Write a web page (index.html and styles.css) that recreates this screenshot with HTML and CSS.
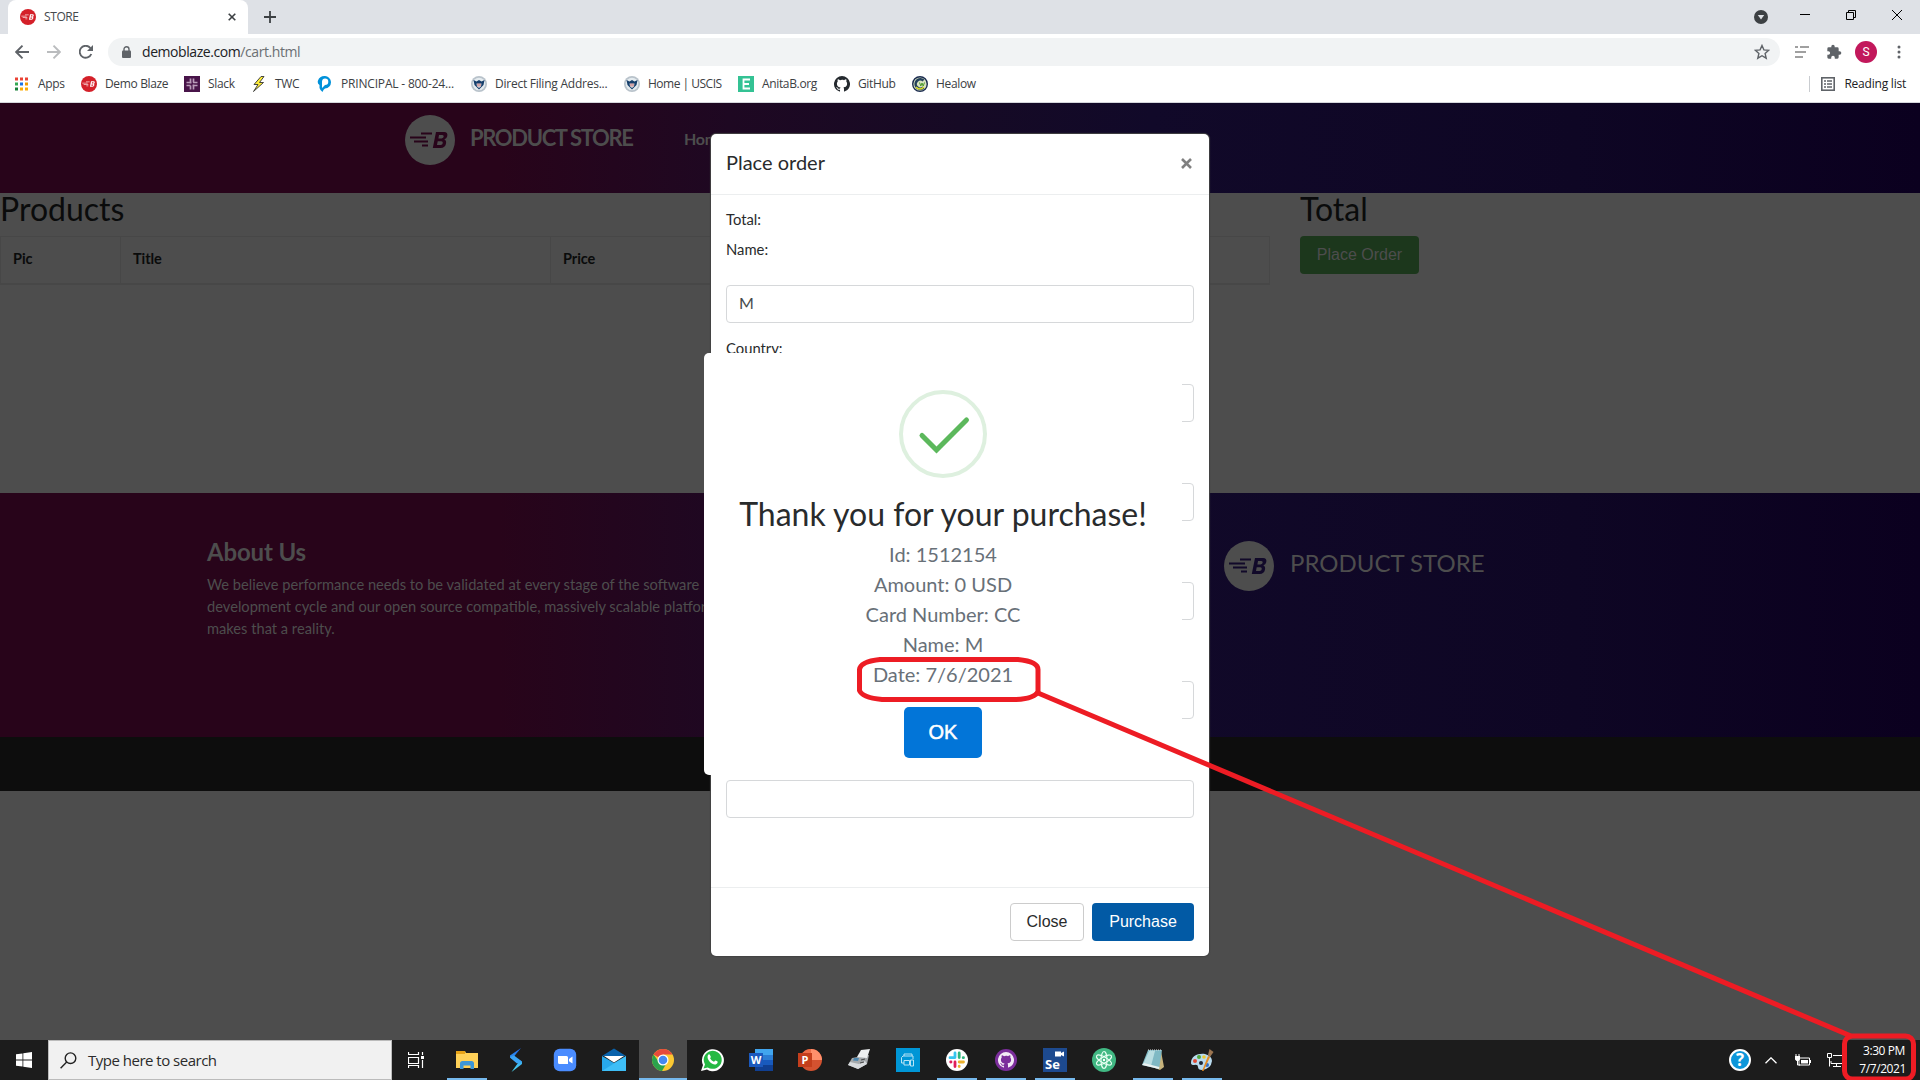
FILE: index.html
```html
<!DOCTYPE html>
<html lang="en">
<head>
<meta charset="utf-8">
<title>STORE</title>
<link rel="stylesheet" href="styles.css">
</head>
<body>
<svg class="defs" width="0" height="0">
  <symbol id="blaze" viewBox="0 0 50 50"><path d="M5 22.500h16M16 18.500h11M9 26.500h14M17 30.500h6" stroke="currentColor" stroke-width="1.800" fill="none"/><path fill-rule="evenodd" d="M31 17h8q4 0 3.300 4q-.6 3-3 3.600q2.300.8 1.700 4Q40.300 33 35.500 33H27.800ZM34 20l-.6 3.400h3.300q1.800 0 2-1.800q.2-1.600-1.400-1.600ZM32.700 26.300l-.7 3.700h3.600q1.900 0 2.200-1.900q.2-1.800-1.500-1.800Z" fill="currentColor"/></symbol>
  <symbol id="dhs" viewBox="0 0 16 16"><circle cx="8" cy="8" r="8" fill="#b9c3cb"/><circle cx="8" cy="8" r="6.300" fill="#e4ebef"/><path d="M2.500 4l3 1.500L8 4l2.500 1.500 3-1.500-1 5L8 13.500 3.500 9Z" fill="#173f6c"/><path d="M5.500 7.500h5l-.5 3-2 1.500-2-1.500Z" fill="#d9e4e9"/><path d="M7 7.500v3M9 7.500v3" stroke="#c44" stroke-width=".8"/></symbol>
  <symbol id="cat" viewBox="0 0 16 16"><path fill="currentColor" d="M8 0a8 8 0 0 0-2.530 15.590c.4.070.55-.17.55-.38v-1.490c-2.230.49-2.700-.94-2.700-.94-.36-.92-.89-1.170-.89-1.170-.73-.5.05-.49.050-.49.810.06 1.230.83 1.230.83.720 1.230 1.880.87 2.340.67.070-.52.280-.87.510-1.070-1.780-.2-3.640-.89-3.640-3.950 0-.87.310-1.590.82-2.150-.08-.2-.36-1.020.08-2.120 0 0 .67-.21 2.200.82A7.600 7.600 0 0 1 8 3.870c.68 0 1.360.09 2 .27 1.530-1.040 2.200-.82 2.200-.82.440 1.100.16 1.920.08 2.120.510.560.820 1.270.820 2.150 0 3.070-1.870 3.750-3.650 3.950.290.250.540.730.540 1.480v2.190c0 .21.150.460.550.380A8 8 0 0 0 8 0Z"/></symbol>
</svg>

<div class="tabstrip">
  <div class="tab">
    <span class="favicon"><svg viewBox="4 6 42 38" width="14" height="14"><use href="#blaze" width="50" height="50"/></svg></span>
    <span class="tab-title">STORE</span>
    <svg class="tab-x" width="8" height="8" viewBox="0 0 8 8"><path d="M.7.7l6.600 6.600M7.300.7L.7 7.300" stroke="#3c4043" stroke-width="1.600"/></svg>
  </div>
  <svg class="plus" width="12" height="12" viewBox="0 0 12 12"><path d="M6 0v12M0 6h12" stroke="#3c4043" stroke-width="1.800"/></svg>
  <div class="window-controls">
    <svg width="14" height="14" viewBox="0 0 14 14"><circle cx="7" cy="7" r="7" fill="#3c4043"/><path d="M3.800 5h6.400L7 9.500Z" fill="#dee1e6"/></svg>
    <svg width="10" height="11" viewBox="0 0 10 11"><path d="M0 5.500h10" stroke="#000"/></svg>
    <svg width="10" height="10" viewBox="0 0 10 10"><path d="M.5 2.500h7v7h-7ZM2.500 2.500V.5h7v7h-2" fill="none" stroke="#000"/></svg>
    <svg width="10" height="10" viewBox="0 0 10 10"><path d="M0 0l10 10M10 0L0 10" stroke="#000"/></svg>
  </div>
</div>

<div class="toolbar">
  <div class="nav-buttons">
    <svg width="14" height="14" viewBox="0 0 14 14"><path d="M14 7H1M7.500.7L1.200 7l6.300 6.300" fill="none" stroke="#5f6368" stroke-width="1.900"/></svg>
    <svg width="14" height="14" viewBox="0 0 14 14"><path d="M0 7h13M6.500.7L12.800 7l-6.300 6.300" fill="none" stroke="#babcbe" stroke-width="1.900"/></svg>
    <svg width="14" height="14" viewBox="0 0 14 14"><path d="M12.300 9A6 6 0 1 1 11.200 2.800L13 4.600" fill="none" stroke="#5f6368" stroke-width="1.900"/><path d="M14 0v6H8Z" fill="#5f6368"/></svg>
  </div>
  <div class="omnibox">
    <svg width="9" height="12" viewBox="0 0 9 12"><path d="M2 5V3.200a2.500 2.500 0 0 1 5 0V5" fill="none" stroke="#5f6368" stroke-width="1.400"/><rect y="4.500" width="9" height="7.500" rx="1" fill="#5f6368"/></svg>
    <span class="url">demoblaze.com<em>/cart.html</em></span>
    <svg class="star" width="16" height="16" viewBox="0 0 16 16"><path d="M8 1.500l1.900 4.400 4.800.4-3.600 3.200 1.100 4.700L8 11.700l-4.200 2.500 1.100-4.700L1.300 6.300l4.800-.4Z" fill="none" stroke="#5f6368" stroke-width="1.400"/></svg>
  </div>
  <svg class="ext-list" width="14" height="12" viewBox="0 0 14 12"><path d="M0 1h3M5 1h9M0 6h11M0 11h8" stroke="#a0a0a0" stroke-width="2"/></svg>
  <svg class="puzzle" width="16" height="16" viewBox="0 0 24 24"><path fill="#5f6368" d="M20.500 11H19V7a2 2 0 0 0-2-2h-4V3.500a2.500 2.500 0 0 0-5 0V5H4a2 2 0 0 0-2 2v3.800h1.500a2.700 2.700 0 0 1 0 5.400H2V20a2 2 0 0 0 2 2h3.800v-1.500a2.700 2.700 0 0 1 5.400 0V22H17a2 2 0 0 0 2-2v-4h1.500a2.500 2.500 0 0 0 0-5Z"/></svg>
  <span class="avatar">S</span>
  <svg class="dots" width="4" height="14" viewBox="0 0 4 14"><g fill="#5f6368"><circle cx="2" cy="2" r="1.500"/><circle cx="2" cy="7" r="1.500"/><circle cx="2" cy="12" r="1.500"/></g></svg>
</div>

<div class="bookmarks">
  <a class="bm apps"><svg width="14" height="14" viewBox="0 0 14 14"><path d="M0 2h3M5 2h3M10 2h3" stroke="#ea4335" stroke-width="3"/><path d="M0 7h3" stroke="#34a853" stroke-width="3"/><path d="M5 7h3" stroke="#1a73e8" stroke-width="3"/><path d="M10 7h3" stroke="#f29900" stroke-width="3"/><path d="M0 12h3" stroke="#188038" stroke-width="3"/><path d="M5 12h3M10 12h3" stroke="#fbab05" stroke-width="3"/></svg><span>Apps</span></a>
  <a class="bm demo"><span class="favicon"><svg viewBox="4 6 42 38" width="14" height="14"><use href="#blaze" width="50" height="50"/></svg></span><span>Demo Blaze</span></a>
  <a class="bm slack"><svg width="16" height="16" viewBox="0 0 16 16"><path fill="#481449" d="M0 0h16v16H0z"/><path d="M6.500 2.500v5M9.500 2.500v4M6.500 9.500v4M9.500 8.500v5M2.500 6.500h5M9 6.500h4.500M2.500 9.500h4M8.500 9.500h5" stroke="#b99bb9" stroke-width="1.700"/></svg><span>Slack</span></a>
  <a class="bm twc"><svg width="16" height="16" viewBox="0 0 16 16"><path d="M10 .5L3 8.500h4L2.500 15.500 12.500 6.500H8.500L13 .5Z" fill="#ffee38" stroke="#333" stroke-width=".9"/></svg><span>TWC</span></a>
  <a class="bm principal"><svg width="16" height="16" viewBox="0 0 16 16"><path d="M7.500 0a6 6 0 0 1 .5 12.500Q6.500 13 5.500 16 3 14 2.500 12V9Q0 7.500 1 4.500 2.500 0 7.500 0Z" fill="#0091da"/><path d="M8 2.500a3.300 3.300 0 0 1 0 6.600L5 12V5.500A3.300 3.300 0 0 1 8 2.500Z" fill="#fff"/></svg><span>PRINCIPAL - 800-24...</span></a>
  <a class="bm filing"><svg width="16" height="16"><use href="#dhs"/></svg><span>Direct Filing Addres...</span></a>
  <a class="bm uscis"><svg width="16" height="16"><use href="#dhs"/></svg><span>Home | USCIS</span></a>
  <a class="bm anita"><svg width="16" height="16" viewBox="0 0 16 16"><path fill="#34c294" d="M0 0h16v16H0z"/><path d="M12 3.500H5.500v9H12M5.500 8h5.500" fill="none" stroke="#fff" stroke-width="1.800"/></svg><span>AnitaB.org</span></a>
  <a class="bm github"><svg width="16" height="16" color="#24292e"><use href="#cat"/></svg><span>GitHub</span></a>
  <a class="bm healow"><svg width="16" height="16" viewBox="0 0 16 16"><circle cx="8" cy="8" r="7.300" fill="#d8e2c0" stroke="#1b2c50" stroke-width="1.400"/><path d="M11.500 4.500a4.700 4.700 0 1 0 0 7" fill="none" stroke="#24415c" stroke-width="2.600"/><path d="M4 11q4 4 8 0" fill="none" stroke="#dddf28" stroke-width="1.400"/><path d="M7.500 6.500l1.300 3.500 1.200-3 1.200 3 1.300-3.500" fill="none" stroke="#4c9a2b"/></svg><span>Healow</span></a>
  <a class="reading"><svg width="14" height="14" viewBox="0 0 14 14"><rect x=".8" y=".8" width="12.400" height="12.400" fill="none" stroke="#5f6368" stroke-width="1.600"/><path d="M3 4h2M6 4h5M3 7h2M6 7h5M3 10h2M6 10h5" stroke="#5f6368" stroke-width="1.400"/></svg><span>Reading list</span></a>
</div>

<main class="page">
  <header class="site-nav">
    <svg class="brand-logo" width="50" height="50"><circle cx="25" cy="25" r="25" fill="#4d4d4d"/><use href="#blaze" width="50" height="50"/></svg>
    <span class="brand">PRODUCT STORE</span>
    <nav><a>Home</a><a>Contact</a><a>About us</a><a>Cart</a><a>Log out</a><a>Welcome S</a></nav>
  </header>
  <section class="cart">
    <div class="products">
      <h2>Products</h2>
      <div class="cart-head"><b>Pic</b><b>Title</b><b>Price</b><b>x</b></div>
    </div>
    <div class="total">
      <h2>Total</h2>
      <button class="place">Place Order</button>
    </div>
  </section>
  <footer class="site-footer">
    <div class="about">
      <h4>About Us</h4>
      <p>We believe performance needs to be validated at every stage of the software<br>development cycle and our open source compatible, massively scalable platform<br>makes that a reality.</p>
    </div>
    <div class="foot-brand">
      <svg class="brand-logo" width="50" height="50"><circle cx="25" cy="25" r="25" fill="#4d4d4d"/><use href="#blaze" width="50" height="50"/></svg>
      <span>PRODUCT STORE</span>
    </div>
  </footer>
  <div class="copyright"></div>

  <div class="modal">
    <div class="modal-head"><h5>Place order</h5><svg width="11" height="11" viewBox="0 0 11 11"><path d="M1 1l9 9M10 1L1 10" stroke="#808080" stroke-width="2.600"/></svg></div>
    <div class="modal-body">
      <p class="sum">Total:</p>
      <label>Name:</label><div class="field">M</div>
      <label>Country:</label><div class="field"></div>
      <label>City:</label><div class="field"></div>
      <label>Credit card:</label><div class="field"></div>
      <label>Month:</label><div class="field"></div>
      <label>Year:</label><div class="field"></div>
    </div>
    <div class="modal-foot"><button class="close">Close</button><button class="purchase">Purchase</button></div>
  </div>

  <div class="alert">
    <svg width="88" height="88" viewBox="0 0 88 88"><circle cx="44" cy="44" r="42" fill="none" stroke="#def0df" stroke-width="4"/><path d="M23 45.500L37.500 60 67.500 30" fill="none" stroke="#5cb85c" stroke-width="5" stroke-linecap="round"/></svg>
    <h2>Thank you for your purchase!</h2>
    <p>Id: 1512154<br>Amount: 0 USD<br>Card Number: CC<br>Name: M<br>Date: 7/6/2021</p>
    <button class="ok">OK</button>
  </div>
</main>

<div class="taskbar">
  <div class="start"><svg width="16" height="16" viewBox="0 0 16 16"><path fill="#fff" d="M0 2.300l6.500-.9v6.200H0ZM7.300 1.300L16 0v7.600H7.300ZM0 8.400h6.500v6.200L0 13.700ZM7.300 8.400H16V16l-8.700-1.300Z"/></svg></div>
  <div class="search"><svg width="17" height="17" viewBox="0 0 17 17"><circle cx="10.500" cy="6.200" r="5.300" fill="none" stroke="#222" stroke-width="1.400"/><path d="M6.700 10L.6 16.200" stroke="#222" stroke-width="1.400"/></svg><span>Type here to search</span></div>
  <div class="taskview"><svg width="16" height="16" viewBox="0 0 16 16"><path d="M.5 0v2.500h10V0M.5 5.500h10v6H.5ZM.5 16v-2.500h10V16M14.500 0v3M14.500 8v8" fill="none" stroke="#fff" stroke-width="1.200"/><path d="M13 4h3v3h-3z" fill="#fff"/></svg></div>
  <div class="apps-row">
    <i class="on"><svg width="24" height="24" viewBox="0 0 24 24"><path d="M1 3h9l1 2h12v15H1Z" fill="#ffd158"/><path d="M1 3h9v3H1Z" fill="#e8a317"/><path d="M5 21v-5.500a2.500 2.500 0 0 1 2.500-2.500h9a2.500 2.500 0 0 1 2.500 2.500V21h-3.500v-3.500h-7V21Z" fill="#3c96d8"/></svg></i>
    <i><svg width="24" height="24" viewBox="0 0 24 24"><defs><linearGradient id="bolt" x2="0" y2="1"><stop stop-color="#1c62e8"/><stop offset="1" stop-color="#4fe0f5"/></linearGradient></defs><path d="M17 0L6 7.500v2l8 5.500L7.500 24 18 16v-2.500L9.500 9Z" fill="url(#bolt)"/><path d="M6 9.500l7 6 5-2-8-6Z" fill="#3ba4f5"/></svg></i>
    <i><svg width="24" height="24" viewBox="0 0 24 24"><rect x=".8" y=".8" width="22.400" height="22.400" rx="6" fill="#4a8cff"/><path d="M5 8h8.500q1.500 0 1.500 1.500V16H6.500Q5 16 5 14.500ZM16 11l3.500-2.500v7L16 13.200Z" fill="#fff"/></svg></i>
    <i><svg width="24" height="24" viewBox="0 0 24 24"><path d="M0 8l12-7.500L24 8Z" fill="#0a62ab"/><path d="M0 8v15h24V8L12 15Z" fill="#28a8ea"/><path d="M0 23L24 8v15Z" fill="#50d0ff" opacity=".55"/><path d="M2 8h20L12 14.500Z" fill="#fff"/></svg></i>
    <i class="active"><svg width="24" height="24" viewBox="0 0 24 24"><circle cx="12" cy="12" r="11" fill="#fbc832"/><path d="M12 12L2.500 6.500A11 11 0 0 1 21.500 6.500H12Z" fill="#e64a3c"/><path d="M2.500 6.500A11 11 0 0 0 11 23l5-8.500-8-.5Z" fill="#2ba24c"/><circle cx="12" cy="12" r="5.500" fill="#fff"/><circle cx="12" cy="12" r="4.300" fill="#4688f1"/></svg></i>
    <i><svg width="24" height="24" viewBox="0 0 24 24"><path d="M1 23l2-6A11 11 0 1 1 7 21.500Z" fill="#fff"/><path d="M3.500 20.500L5 16.500A9 9 0 1 1 7.800 19.400Z" fill="#25b943"/><path d="M8.500 6.500c1-.8 1.500 0 2.300 2.200.2.600-1 1.300-.6 1.900q1.300 2.300 3.700 3.200c.6.200 1-1.400 1.600-1.200 2 .9 2.500 1 2.100 1.800-1 2.600-3.300 2.300-5.300 1.400C9 14.300 6 9 8.500 6.500Z" fill="#fff"/></svg></i>
    <i><svg width="24" height="24" viewBox="0 0 24 24"><path fill="#41a5ee" d="M6 1h18v6H6z"/><path fill="#2b7cd3" d="M6 7h18v5H6z"/><path fill="#185abd" d="M6 12h18v5H6z"/><path fill="#103f91" d="M6 17h18v6H6z"/><path fill="#1b59bd" d="M0 5h14v14H0z"/><text x="7" y="16" text-anchor="middle" class="glyph">W</text></svg></i>
    <i><svg width="24" height="24" viewBox="0 0 24 24"><circle cx="13" cy="12" r="11" fill="#d35230"/><path d="M13 1a11 11 0 0 1 11 11H13Z" fill="#ff8f6b"/><path d="M13 1v11H2A11 11 0 0 1 13 1Z" fill="#ed6c47"/><path fill="#c43e1c" d="M0 5h14v14H0z"/><text x="7" y="16" text-anchor="middle" class="glyph">P</text></svg></i>
    <i><svg width="24" height="24" viewBox="0 0 24 24"><path d="M1 17l4-7 17-3-2 9-9 5Z" fill="#a5a9ac"/><path d="M10 9l4-7 9-1-3 9Z" fill="#eef0f1"/><path d="M1 17l10 4 9-5-2-3-6 3-9-2Z" fill="#d7dadd"/><path d="M7 10h5l-1 3-5-.5Z" fill="#4c86ae"/><path d="M14 12l4-1M13 15l4-1" stroke="#444"/></svg></i>
    <i><svg width="24" height="24" viewBox="0 0 24 24"><path fill="#0096d6" d="M0 0h24v24H0z"/><path d="M8 8V6h8v2M8 15H5.500V9.500L7 8h10v3M8 17v-4.500h5.500V17ZM14.500 12h3v6h-3Z" fill="none" stroke="#b9e4f5"/></svg></i>
    <i class="on"><svg width="24" height="24" viewBox="0 0 24 24"><circle cx="12" cy="12" r="11" fill="#fff"/><g stroke-width="2.800" stroke-linecap="round"><path d="M10 5v4.500M5 9.700h4" stroke="#36c5f0"/><path d="M14.200 5v4.500M18.500 9.700h-.3" stroke="#2eb67d"/><path d="M14.200 14h4.300M14.200 18.500v-.3" stroke="#ecb22e"/><path d="M10 14v4.500M5.700 14H6" stroke="#e01e5a"/></g></svg></i>
    <i class="on"><svg width="24" height="24" viewBox="0 0 24 24"><circle cx="12" cy="12" r="11" fill="#7b2d9b"/><svg x="4" y="4" width="16" height="16" color="#f3eaf6"><use href="#cat"/></svg></svg></i>
    <i class="on"><svg width="24" height="24" viewBox="0 0 24 24"><path fill="#1d4a8f" d="M0 0h24v24H0z"/><path d="M12 3.500h6V5l3-1.500v5L18 7v1.500h-6Z" fill="#fff"/><text x="2" y="21" class="glyph se">Se</text></svg></i>
    <i><svg width="24" height="24" viewBox="0 0 24 24"><circle cx="12" cy="12" r="12" fill="#41b883"/><g fill="none" stroke="#e8fff3" stroke-width="1.100"><ellipse cx="12" cy="12" rx="3" ry="8.500"/><ellipse cx="12" cy="12" rx="3" ry="8.500" transform="rotate(60 12 12)"/><ellipse cx="12" cy="12" rx="3" ry="8.500" transform="rotate(120 12 12)"/></g><circle cx="12" cy="12" r="1.200" fill="#fff"/></svg></i>
    <i class="on"><svg width="24" height="24" viewBox="0 0 24 24"><path d="M20 3l3 16-4 3-5-2Z" fill="#c7b37c"/><path d="M7 2h14l-3 19-17-4Z" fill="#7fb9c4"/><path d="M8 3l6 0-4 15-8-1.500Z" fill="#b9dde1"/><path d="M1 17l17 4 .3-2L3 15Z" fill="#e9f1f0"/><path d="M7 2h14" stroke="#ddd" stroke-dasharray="1 1"/></svg></i>
    <i class="on"><svg width="24" height="24" viewBox="0 0 24 24"><path d="M1 15C1 8 8 5 15 6q7 2 7 7-1 8-10 9-4 0-4-3t-4-2q-3 0-3-2Z" fill="#b9dbee"/><circle cx="5" cy="13" r="2" fill="#e04b34"/><circle cx="9" cy="9" r="2" fill="#50a83b"/><circle cx="14" cy="9" r="1.800" fill="#eec82d"/><circle cx="11" cy="15" r="2" fill="#1c2635"/><circle cx="17" cy="17" r="2" fill="#3070c8"/><path d="M12 23l6-15 2 1-6.500 14Z" fill="#e58b22"/><path d="M18 7l1.500-6 4 3-3.500 5Z" fill="#9c7550"/></svg></i>
  </div>
  <div class="tray">
    <svg width="22" height="22" viewBox="0 0 22 22"><circle cx="11" cy="11" r="10" fill="#0c96da" stroke="#fff" stroke-width="2"/><text x="11" y="17" text-anchor="middle" class="glyph help">?</text></svg>
    <svg width="12" height="7" viewBox="0 0 12 7"><path d="M.5 6.300L6 .8l5.500 5.500" fill="none" stroke="#fff" stroke-width="1.300"/></svg>
    <svg width="16" height="13" viewBox="0 0 16 13"><path d="M4 4h10.500v7H4Z" fill="none" stroke="#fff"/><path d="M6 6h7v3.500H6ZM15 6h1v3h-1ZM0 2h5v3.500L3.500 7H1.500L0 5.500Z" fill="#fff"/><path d="M1 0v2M4 0v2M2.500 7v4H5" stroke="#fff" fill="none"/></svg>
    <svg width="17" height="14" viewBox="0 0 17 14"><path d="M6 2.500h11M4 8v2.500h13M9.500 10.500v3M6 13.500h8M2.500 5v8.500M.5.500h4v4h-4Z" fill="none" stroke="#fff"/></svg>
    <div class="clock"><span>3:30 PM</span><span>7/7/2021</span></div>
  </div>
</div>

<svg class="markup" width="1920" height="1080" viewBox="0 0 1920 1080"><g fill="none" stroke="#ed1c24" stroke-width="5"><path d="M880 659.500h138q20 2 20 10v22q-3 7-22 8H882q-20-2-22.500-9v-21q1-8 20.500-10Z"/><path d="M1038 693L1851 1036"/><rect x="1844.500" y="1036" width="69" height="43" rx="8"/></g></svg>
</body>
</html>
```
FILE: styles.css
```css
* { box-sizing: border-box; }
body { margin: 0; width: 1920px; height: 1080px; overflow: hidden; display: flex; flex-direction: column; font-family: "Lato", sans-serif; background: #4d4d4d; }
svg { display: block; flex: none; }
.defs { position: absolute; }
h2, h4, h5, p { margin: 0; font-weight: 400; }
button { font-family: "Liberation Sans", sans-serif; font-size: 16px; padding: 0; border-radius: 4px; }

.tabstrip { height: 34px; flex: none; background: #dee1e6; display: flex; align-items: center; padding-left: 8px; font: 12px "Open Sans", sans-serif; color: #45494d; }
.tab { width: 240px; height: 34px; background: #fff; border-radius: 8px 8px 0 0; display: flex; align-items: center; padding: 0 12px; }
.tab-title { margin-left: 8px; flex: 1; letter-spacing: -0.4px; padding-bottom: 1px; }
.favicon { width: 16px; height: 16px; flex: none; border-radius: 50%; background: #d42029; color: #fff; display: flex; align-items: center; justify-content: center; }
.plus { margin-left: 16px; }
.window-controls { margin-left: auto; display: flex; align-items: center; padding: 0 18px 5px 0; gap: 36px; }
.window-controls svg:first-child { margin: 5px -4px 0 0; }

.toolbar { height: 36px; flex: none; background: #fff; display: flex; align-items: center; padding: 0 19px 0 15px; }
.nav-buttons { display: flex; gap: 18px; width: 93px; }
.omnibox { width: 1672px; height: 28px; border-radius: 14px; background: #f1f3f4; display: flex; align-items: center; padding: 0 10px 0 14px; }
.url { font: 14px "Open Sans", sans-serif; letter-spacing: -0.43px; color: #202124; margin-left: 11px; flex: 1; padding-bottom: 2px; }
.url em { font-style: normal; color: #6b6f73; }
.ext-list { margin-left: 15px; }
.puzzle { margin-left: 17px; }
.avatar { width: 22px; height: 22px; border-radius: 50%; background: #c2185b; color: #fff; font: 12px/22px Roboto, sans-serif; text-align: center; margin-left: 13px; }
.dots { margin-left: auto; }

.bookmarks { height: 33px; flex: none; background: #fff; border-bottom: 1px solid #d5d7dc; display: flex; align-items: center; padding: 0 14px 4px 15px; font: 12px "Open Sans", sans-serif; letter-spacing: -0.35px; color: #3c4043; white-space: nowrap; }
.bookmarks span:last-child { padding-bottom: 1px; }
.bm { display: flex; align-items: center; gap: 8px; flex: none; }
.apps { width: 66px; gap: 9px; }
.demo { width: 103px; }
.slack { width: 67px; }
.twc { width: 66px; }
.principal { width: 154px; letter-spacing: -0.18px; }
.filing { width: 153px; letter-spacing: -0.24px; }
.uscis { width: 114px; letter-spacing: -0.5px; }
.anita { width: 96px; }
.github { width: 78px; }
.reading { margin-left: auto; height: 16px; display: flex; align-items: center; gap: 9px; border-left: 1px solid #c9ccd0; padding-left: 11px; color: #202124; letter-spacing: -0.22px; }

.page { flex: 1; position: relative; overflow: hidden; background: #4d4d4d; color: #0a0b0b; }
.site-nav, .site-footer { background: linear-gradient(90deg, #28041a 0%, #28041a 26%, #1e0822 38%, #160a25 50%, #110929 60%, #0e0624 82%, #0b001f 100%); color: #4d4d4d; }
.site-nav { height: 90px; display: flex; align-items: flex-start; padding: 12px 0 0 405px; }
.site-nav .brand-logo { color: #28041a; }
.brand { font-size: 22px; font-weight: 700; line-height: 24px; letter-spacing: -1.35px; margin: 11px 0 0 15px; width: 214px; flex: none; }
.site-nav nav { display: flex; gap: 14px; margin-top: 14px; font-weight: 700; font-size: 16px; line-height: 19px; letter-spacing: -0.3px; white-space: nowrap; }
.cart { height: 300px; display: flex; }
.products { width: 1270px; }
h2 { font-size: 32px; line-height: 35px; }
.cart h2 { line-height: 31px; margin-bottom: 12px; }
.cart-head { height: 49px; display: grid; grid-template-columns: 120px 430px 360px 1fr; border: 1px solid #474747; border-bottom-width: 2px; }
.cart-head b { font-size: 14.500px; line-height: 44px; padding-left: 12px; border-right: 1px solid #474747; letter-spacing: -0.05px; }
.cart-head b:last-child { border: 0; }
.total { margin-left: 30px; }
.place { display: block; width: 119px; height: 38px; border: 0; background: #1c371c; color: #4d4d4d; }
.site-footer { height: 244px; display: flex; padding: 0 0 0 207px; }
.about { width: 1017px; padding-top: 44px; }
.about h4 { font-size: 24px; font-weight: 700; line-height: 30px; letter-spacing: -0.15px; }
.about p { font-size: 14.660px; line-height: 22px; margin-top: 7px; white-space: nowrap; }
.foot-brand { display: flex; gap: 16px; padding-top: 48px; font-size: 24px; line-height: 44px; }
.foot-brand .brand-logo { color: #110929; }
.copyright { height: 54px; background: #0d0d0d; }

.modal { position: absolute; left: 711px; top: 31px; width: 498px; height: 822px; background: #fff; border-radius: 5px; color: #292b2c; box-shadow: 0 0 1px 1px #434343; display: flex; flex-direction: column; }
.modal-head { height: 61px; border-bottom: 1px solid #eceeef; display: flex; justify-content: space-between; padding: 13px 17px 0 15px; }
.modal-head svg { margin-top: 11px; }
h5 { font-size: 20px; line-height: 30px; }
.modal-body { flex: 1; padding: 13px 15px; font-size: 14.800px; display: flex; flex-direction: column; }
.sum { height: 30px; line-height: 22px; }
label { height: 47px; line-height: 22px; flex: none; }
.field { height: 38px; flex: none; border: 1px solid #d6d8da; border-radius: 4px; font-size: 16px; line-height: 34px; padding-left: 12px; color: #464a4c; margin-bottom: 14px; }
.modal-foot { height: 69px; border-top: 1px solid #eceeef; padding: 15px; display: flex; justify-content: flex-end; gap: 8px; }
.modal-foot button { height: 38px; }
.close { width: 74px; background: #fff; border: 1px solid #ccc; color: #292b2c; }
.purchase { width: 102px; background: #025aa5; border: 0; color: #fff; }

.alert { position: absolute; left: 704px; top: 250px; width: 478px; height: 422px; background: #fff; border-radius: 5px; color: #292b2c; display: flex; flex-direction: column; align-items: center; padding-top: 37px; }
.alert h2 { margin-top: 16px; line-height: 40px; white-space: nowrap; }
.alert p { margin-top: 5px; font-size: 20px; line-height: 30px; text-align: center; color: #687078; }
.ok { width: 78px; height: 51px; margin-top: 18px; flex: none; background: #0275d8; border: 0; color: #fff; font-size: 20px; border-radius: 5px; -webkit-text-stroke: 0.5px #fff; }

.taskbar { height: 40px; flex: none; background: #1c1c1c; display: flex; color: #fff; font-family: "Open Sans", sans-serif; }
.start { width: 48px; display: flex; align-items: center; justify-content: center; }
.search { width: 344px; background: #f1f1f1; border: 1px solid #bbb; display: flex; align-items: center; gap: 11px; padding-left: 11px; font-size: 15px; letter-spacing: -0.5px; color: #2b2b2b; }
.taskview { width: 50px; display: flex; align-items: center; padding-left: 16px; }
.apps-row { display: flex; gap: 1px; padding-left: 1px; }
.apps-row i { width: 48px; display: flex; align-items: center; justify-content: center; background: linear-gradient(#76b9ed, #76b9ed) center bottom / 0 2px no-repeat; }
.apps-row i.on { background-size: 40px 2px; }
.apps-row i.active { background-size: 48px 2px; background-color: #4b4b4b; }
.glyph { font: 700 11px "Open Sans", sans-serif; fill: #fff; }
.glyph.se { font-size: 13px; }
.glyph.help { font-size: 17px; }
.tray { margin-left: auto; display: flex; align-items: center; padding-right: 14px; }
.tray svg:nth-child(2) { margin-left: 14px; }
.tray svg:nth-child(3) { margin-left: 18px; }
.tray svg:nth-child(4) { margin-left: 16px; }
.clock { display: flex; flex-direction: column; width: 62px; font-size: 12px; line-height: 18px; letter-spacing: -0.4px; text-align: right; }
.clock span:first-child { padding-right: 1px; }
.markup { position: absolute; left: 0; top: 0; }
```
